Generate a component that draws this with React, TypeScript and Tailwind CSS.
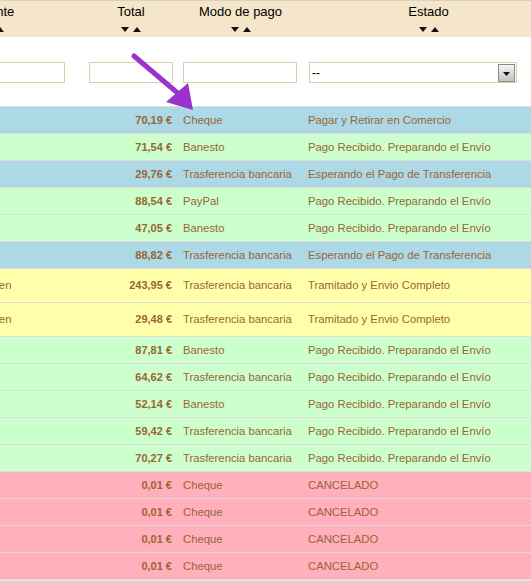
import React from "react";

type Row = {
  bg: string;
  name?: string;
  total: string;
  pago: string;
  estado: string;
  tall?: boolean;
};

const BLUE = "bg-[#add8e6]";
const GREEN = "bg-[#ccffcc]";
const YELLOW = "bg-[#ffffaa]";
const PINK = "bg-[#ffb0bc]";

const rows: Row[] = [
  { bg: BLUE, total: "70,19 €", pago: "Cheque", estado: "Pagar y Retirar en Comercio" },
  { bg: GREEN, total: "71,54 €", pago: "Banesto", estado: "Pago Recibido. Preparando el Envío" },
  { bg: BLUE, total: "29,76 €", pago: "Trasferencia bancaria", estado: "Esperando el Pago de Transferencia" },
  { bg: GREEN, total: "88,54 €", pago: "PayPal", estado: "Pago Recibido. Preparando el Envío" },
  { bg: GREEN, total: "47,05 €", pago: "Banesto", estado: "Pago Recibido. Preparando el Envío" },
  { bg: BLUE, total: "88,82 €", pago: "Trasferencia bancaria", estado: "Esperando el Pago de Transferencia" },
  { bg: YELLOW, name: "María del Carmen", total: "243,95 €", pago: "Trasferencia bancaria", estado: "Tramitado y Envio Completo", tall: true },
  { bg: YELLOW, name: "María del Carmen", total: "29,48 €", pago: "Trasferencia bancaria", estado: "Tramitado y Envio Completo", tall: true },
  { bg: GREEN, total: "87,81 €", pago: "Banesto", estado: "Pago Recibido. Preparando el Envío" },
  { bg: GREEN, total: "64,62 €", pago: "Trasferencia bancaria", estado: "Pago Recibido. Preparando el Envío" },
  { bg: GREEN, total: "52,14 €", pago: "Banesto", estado: "Pago Recibido. Preparando el Envío" },
  { bg: GREEN, total: "59,42 €", pago: "Trasferencia bancaria", estado: "Pago Recibido. Preparando el Envío" },
  { bg: GREEN, total: "70,27 €", pago: "Trasferencia bancaria", estado: "Pago Recibido. Preparando el Envío" },
  { bg: PINK, total: "0,01 €", pago: "Cheque", estado: "CANCELADO" },
  { bg: PINK, total: "0,01 €", pago: "Cheque", estado: "CANCELADO" },
  { bg: PINK, total: "0,01 €", pago: "Cheque", estado: "CANCELADO" },
  { bg: PINK, total: "0,01 €", pago: "Cheque", estado: "CANCELADO" },
  { bg: GREEN, total: "64,10 €", pago: "Banesto", estado: "Pago Recibido. Preparando el Envío" },
];

const cols = "grid grid-cols-[180px_94px_125px_251px]";

function SortArrows() {
  return (
    <svg width="20" height="5" viewBox="0 0 20 5" className="mt-[7px]">
      <polygon points="0,0 8,0 4,5" fill="#111" />
      <polygon points="12,5 20,5 16,0" fill="#111" />
    </svg>
  );
}

function HeadCell({ label }: { label: string }) {
  return (
    <div className="flex flex-col items-center pt-[3px]">
      <span className="text-[13px] leading-[16px] text-black">{label}</span>
      <SortArrows />
    </div>
  );
}

export default function App() {
  return (
    <div className="relative h-[581px] w-[531px] overflow-hidden bg-white font-['Liberation_Sans',Arial,sans-serif]">
      <div className="ml-[-96px] w-[650px]">
        {/* header */}
        <div className={`${cols} h-[37px] border-t border-[#d8d0c0] bg-[#f5e6c9]`}>
          <HeadCell label="Cliente" />
          <HeadCell label="Total" />
          <HeadCell label="Modo de pago" />
          <HeadCell label="Estado" />
        </div>

        {/* filters */}
        <div className={`${cols} h-[70px] border-b border-[#dcdcdc] pt-[25px]`}>
          <div className="flex justify-end pr-[19px]">
            <div className="h-[21px] w-[150px] border border-[#ddd0aa] bg-white" />
          </div>
          <div className="pl-[5px]">
            <div className="h-[21px] w-[84px] border border-[#ddd0aa] bg-white" />
          </div>
          <div className="pl-[5px]">
            <div className="h-[21px] w-[114px] border border-[#ddd0aa] bg-white" />
          </div>
          <div className="pl-[6px]">
            <div className="flex h-[21px] w-[208px] items-center justify-between border border-[#ddd0aa] bg-white pl-[2px] pr-[1px]">
              <span className="text-[12px] leading-none text-black">--</span>
              <div className="flex h-[18px] w-[17px] items-center justify-center border border-[#8a8a8a] bg-gradient-to-b from-[#f4f4f4] to-[#c4c4c4] pt-[2px]">
                <svg width="7" height="4" viewBox="0 0 7 4">
                  <polygon points="0,0 7,0 3.5,4" fill="#111" />
                </svg>
              </div>
            </div>
          </div>
        </div>

        {/* rows */}
        {rows.map((r, i) => (
          <div
            key={i}
            className={`${cols} ${r.bg} ${r.tall ? "h-[34px]" : "h-[27px]"} border-b border-[#dcdcdc] items-center text-[#996633]`}
          >
            <div className="pl-[17px] text-[11.3px]">{r.name ?? ""}</div>
            <div className="pr-[6px] text-right text-[11px] font-bold">{r.total}</div>
            <div className="pl-[5px] text-[11.3px] whitespace-nowrap">{r.pago}</div>
            <div className="pl-[5px] text-[11.3px] whitespace-nowrap">{r.estado}</div>
          </div>
        ))}
      </div>

      {/* annotation arrow */}
      <svg
        className="pointer-events-none absolute left-0 top-0"
        width="531"
        height="581"
        viewBox="0 0 531 581"
      >
        <line x1="134" y1="56" x2="180" y2="95" stroke="#9933cc" strokeWidth="5" strokeLinecap="round" />
        <polygon points="166,102 188,83 193,110" fill="#9933cc" />
      </svg>
    </div>
  );
}
